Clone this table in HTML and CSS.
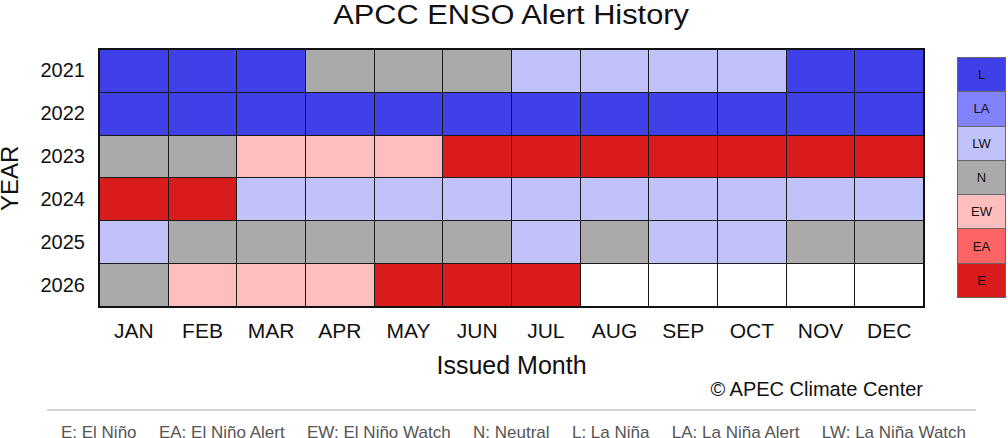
FILE: index.html
```html
<!DOCTYPE html>
<html lang="en">
<head>
<meta charset="utf-8">
<title>APCC ENSO Alert History</title>
<link rel="stylesheet" href="styles.css">
</head>
<body>
<div class="page">
  <div class="title"><span class="title-text">APCC ENSO Alert History</span></div>

  <div class="yaxis">
    <div class="ylabel">YEAR</div>
    <div class="years">
      <div>2021</div><div>2022</div><div>2023</div><div>2024</div><div>2025</div><div>2026</div>
    </div>
  </div>

  <div class="heat">
    <div class="c l"></div><div class="c l"></div><div class="c l"></div><div class="c n"></div><div class="c n"></div><div class="c n"></div><div class="c lw"></div><div class="c lw"></div><div class="c lw"></div><div class="c lw"></div><div class="c l"></div><div class="c l"></div>
    <div class="c l"></div><div class="c l"></div><div class="c l"></div><div class="c l"></div><div class="c l"></div><div class="c l"></div><div class="c l"></div><div class="c l"></div><div class="c l"></div><div class="c l"></div><div class="c l"></div><div class="c l"></div>
    <div class="c n"></div><div class="c n"></div><div class="c ew"></div><div class="c ew"></div><div class="c ew"></div><div class="c e"></div><div class="c e"></div><div class="c e"></div><div class="c e"></div><div class="c e"></div><div class="c e"></div><div class="c e"></div>
    <div class="c e"></div><div class="c e"></div><div class="c lw"></div><div class="c lw"></div><div class="c lw"></div><div class="c lw"></div><div class="c lw"></div><div class="c lw"></div><div class="c lw"></div><div class="c lw"></div><div class="c lw"></div><div class="c lw"></div>
    <div class="c lw"></div><div class="c n"></div><div class="c n"></div><div class="c n"></div><div class="c n"></div><div class="c n"></div><div class="c lw"></div><div class="c n"></div><div class="c lw"></div><div class="c lw"></div><div class="c n"></div><div class="c n"></div>
    <div class="c n"></div><div class="c ew"></div><div class="c ew"></div><div class="c ew"></div><div class="c e"></div><div class="c e"></div><div class="c e"></div><div class="c w"></div><div class="c w"></div><div class="c w"></div><div class="c w"></div><div class="c w"></div>
  </div>

  <div class="legend">
    <div class="lg l">L</div>
    <div class="lg la">LA</div>
    <div class="lg lw">LW</div>
    <div class="lg n">N</div>
    <div class="lg ew">EW</div>
    <div class="lg ea">EA</div>
    <div class="lg e">E</div>
  </div>

  <div class="months">
    <div>JAN</div><div>FEB</div><div>MAR</div><div>APR</div><div>MAY</div><div>JUN</div>
    <div>JUL</div><div>AUG</div><div>SEP</div><div>OCT</div><div>NOV</div><div>DEC</div>
  </div>

  <div class="xlabel">Issued Month</div>
  <div class="credit">© APEC Climate Center</div>
</div>

<div class="rule"></div>
<div class="keys">
  <span>E: El Niño</span>
  <span>EA: El Niño Alert</span>
  <span>EW: El Niño Watch</span>
  <span>N: Neutral</span>
  <span>L: La Niña</span>
  <span>LA: La Niña Alert</span>
  <span>LW: La Niña Watch</span>
</div>
</body>
</html>
```

FILE: styles.css
```css
html, body {
  margin: 0;
  padding: 0;
  background: #fff;
}
body {
  width: 1008px;
  height: 438px;
  overflow: hidden;
  font-family: "Liberation Sans", Arial, sans-serif;
  color: #111;
}
.page {
  display: grid;
  grid-template-columns: 98px 827px 1fr;
}
.title {
  grid-column: 2;
  height: 48px;
  box-sizing: border-box;
  padding-top: 1.5px;
  text-align: center;
  font-size: 27px;
  line-height: 27px;
}
.title-text {
  display: inline-block;
  transform: scaleX(1.14);
}
.yaxis {
  grid-column: 1;
  display: flex;
  height: 260px;
}
.ylabel {
  writing-mode: vertical-rl;
  transform: rotate(180deg);
  font-size: 24px;
  line-height: 20px;
  width: 20px;
  text-align: center;
}
.years {
  flex: 1;
  display: grid;
  grid-template-rows: repeat(6, 1fr);
  row-gap: 1px;
  padding: 2px 13px 2px 0;
  font-size: 20px;
  text-align: right;
}
.years div {
  display: flex;
  align-items: center;
  justify-content: flex-end;
}
.heat {
  grid-column: 2;
  height: 260px;
  box-sizing: border-box;
  border: 2px solid #111;
  background: #1a1a1a;
  display: grid;
  grid-template-columns: repeat(12, 1fr);
  grid-template-rows: repeat(6, 1fr);
  gap: 1px;
}
.l { background: #4040e8; }
.la { background: #8282fc; }
.lw { background: #c2c2fa; }
.n { background: #aaaaaa; }
.ew { background: #ffbebe; }
.ea { background: #ff6464; }
.e { background: #d81c1c; }
.w { background: #ffffff; }

.legend {
  grid-column: 3;
  align-self: start;
  margin: 9px 0 0 32px;
  width: 49px;
  height: 241px;
  box-sizing: border-box;
  border: 1px solid #666;
  display: grid;
  grid-template-rows: repeat(7, 1fr);
  background: #666;
  row-gap: 1px;
}
.lg {
  display: flex;
  align-items: center;
  justify-content: center;
  font-size: 13px;
  color: #111;
}
.months {
  grid-column: 2;
  display: grid;
  grid-template-columns: repeat(12, 1fr);
  column-gap: 1px;
  padding: 0 2px;
  margin-top: 12px;
  font-size: 21px;
  line-height: 21px;
  text-align: center;
}
.xlabel {
  grid-column: 2;
  text-align: center;
  margin-top: 12.4px;
  font-size: 25px;
  line-height: 25px;
}
.credit {
  grid-column: 2;
  text-align: right;
  margin-top: 0.7px;
  padding-right: 2px;
  font-size: 20px;
  line-height: 20px;
}
.rule {
  margin: 10px 0 0 47px;
  width: 929px;
  height: 2px;
  background: #d2d2d2;
}
.keys {
  display: flex;
  justify-content: center;
  gap: 22.4px;
  margin: 12.5px 0 0 47px;
  width: 929px;
  padding-left: 4px;
  box-sizing: border-box;
  font-size: 17px;
  line-height: 17px;
  color: #555;
  white-space: nowrap;
}
```
